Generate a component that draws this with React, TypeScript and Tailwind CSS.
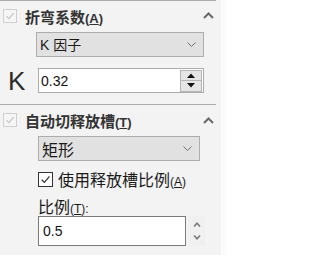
import React from "react";

const CheckMark = ({ color, w = 10 }: { color: string; w?: number }) => (
  <svg width={w} height={w} viewBox="0 0 10 10" fill="none">
    <path d="M1.5 5.2 L4 7.6 L8.6 2.2" stroke={color} strokeWidth="1.1" />
  </svg>
);

const ChevronUp = () => (
  <svg width="11" height="7" viewBox="0 0 11 7" fill="none">
    <path d="M1 6 L5.5 1.5 L10 6" stroke="#6a6a6a" strokeWidth="2" />
  </svg>
);

const ChevronDown = () => (
  <svg width="9" height="5" viewBox="0 0 9 5" fill="none">
    <path d="M0.5 0.5 L4.5 4.5 L8.5 0.5" stroke="#707070" strokeWidth="1" />
  </svg>
);

const SmallChevron = ({ up }: { up?: boolean }) => (
  <svg width="8" height="5" viewBox="0 0 8 5" fill="none">
    <path d={up ? "M1 4.5 L4 1.2 L7 4.5" : "M1 0.5 L4 3.8 L7 0.5"} stroke="#7a7a7a" strokeWidth="1.6" />
  </svg>
);

const Title = ({ text, key1 }: { text: string; key1: string }) => (
  <span className="text-[15px] font-bold text-[#333333] leading-none whitespace-nowrap">
    {text}
    <span className="text-[13px] font-['Liberation_Sans',sans-serif]">
      (<span className="underline underline-offset-1">{key1}</span>)
    </span>
  </span>
);

export default function App() {
  return (
    <div className="w-[226px] h-[255px] flex bg-[#fbfbfb] overflow-hidden font-['Noto_Sans_CJK_SC','Liberation_Sans',sans-serif]">
      <div className="w-[221px] h-full bg-[#f3f3f3] flex flex-col">
        {/* Section 1 */}
        <div className="h-px w-[216px] bg-[#ababab]" />
        <div className="h-[29px] flex items-center">
          <div className="ml-[3px] w-[14px] h-[14px] border border-[#cfcfcf] bg-[#f6f6f6] flex items-center justify-center">
            <CheckMark color="#c4c4c4" />
          </div>
          <div className="ml-[8px]">
            <Title text="折弯系数" key1="A" />
          </div>
          <div className="ml-auto mr-[7px] flex items-center">
            <ChevronUp />
          </div>
        </div>
        <div className="mt-[2px] ml-[36px] w-[168px] h-[25px] bg-[#e1e1e1] border border-[#adadad] flex items-center pl-[3px] pr-[7px]">
          <span className="text-[14px] text-[#1a1a1a] leading-none">
            <span className="font-['Liberation_Sans',sans-serif]">K </span>因子
          </span>
          <div className="ml-auto flex items-center">
            <ChevronDown />
          </div>
        </div>
        <div className="mt-[11px] h-[25px] flex items-center">
          <span className="ml-[8px] w-[30px] text-[26px] leading-none font-light text-[#2a2a2a] font-['Liberation_Sans',sans-serif]">
            K
          </span>
          <div className="w-[166px] h-[25px] bg-white border border-[#acacac] flex items-center">
            <span className="ml-[2px] text-[14px] text-[#111111] leading-none font-['Liberation_Sans',sans-serif]">0.32</span>
            <div className="ml-auto mr-px flex flex-col">
              <div className="w-[22px] h-[11px] bg-[#e5e5e5] border border-[#b4b4b4] flex items-center justify-center">
                <svg width="8" height="5" viewBox="0 0 8 5"><path d="M0 5 L4 0.5 L8 5 Z" fill="#111" /></svg>
              </div>
              <div className="w-[22px] h-[11px] bg-[#e5e5e5] border border-t-0 border-[#b4b4b4] flex items-center justify-center">
                <svg width="8" height="5" viewBox="0 0 8 5"><path d="M0 0 L8 0 L4 4.5 Z" fill="#111" /></svg>
              </div>
            </div>
          </div>
        </div>
        <div className="mt-[11px] h-px w-[216px] bg-[#ababab]" />

        {/* Section 2 */}
        <div className="h-[30px] flex items-center">
          <div className="ml-[3px] w-[14px] h-[14px] border border-[#cfcfcf] bg-[#f6f6f6] flex items-center justify-center">
            <CheckMark color="#c4c4c4" />
          </div>
          <div className="ml-[8px]">
            <Title text="自动切释放槽" key1="T" />
          </div>
          <div className="ml-auto mr-[7px] flex items-center">
            <ChevronUp />
          </div>
        </div>
        <div className="mt-px ml-[38px] w-[162px] h-[25px] bg-[#e1e1e1] border border-[#adadad] flex items-center pl-[3px] pr-[7px]">
          <span className="text-[16px] text-[#1a1a1a] leading-none">矩形</span>
          <div className="ml-auto flex items-center">
            <ChevronDown />
          </div>
        </div>
        <div className="mt-[11px] h-[15px] flex items-center ml-[38px]">
          <div className="w-[15px] h-[15px] border border-[#333333] bg-white flex items-center justify-center">
            <CheckMark color="#333333" w={11} />
          </div>
          <span className="ml-[5px] text-[16px] text-[#1a1a1a] leading-none whitespace-nowrap">
            使用释放槽比例
            <span className="text-[12px] font-['Liberation_Sans',sans-serif]">
              (<span className="underline underline-offset-1">A</span>)
            </span>
          </span>
        </div>
        <div className="mt-[9px] h-[20px] flex items-center ml-[38px]">
          <span className="text-[16px] text-[#1a1a1a] leading-none whitespace-nowrap">
            比例
            <span className="text-[12px] font-['Liberation_Sans',sans-serif]">
              (<span className="underline underline-offset-1">T</span>):
            </span>
          </span>
        </div>
        <div className="h-[30px] flex ml-[38px]">
          <div className="w-[148px] h-[30px] bg-white border border-[#7a7a7a] flex items-center">
            <span className="ml-[4px] text-[14px] text-[#111111] leading-none font-['Liberation_Sans',sans-serif]">0.5</span>
          </div>
          <div className="ml-[2px] w-[17px] h-[30px] bg-[#f0f0f0] flex flex-col items-center justify-center gap-[8px]">
            <SmallChevron up />
            <SmallChevron />
          </div>
        </div>
      </div>
    </div>
  );
}
